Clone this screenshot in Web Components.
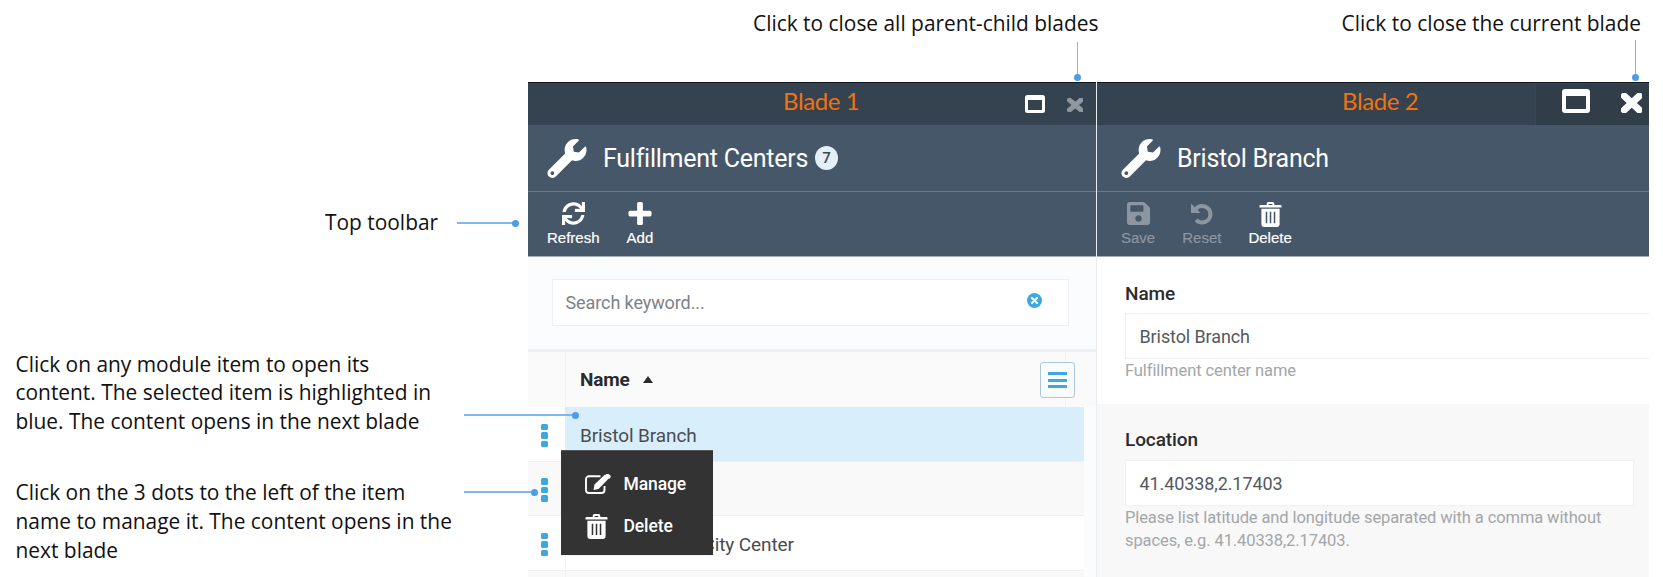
<!DOCTYPE html>
<html lang="en"><head><meta charset="utf-8"><title>Blades</title>
<style>html,body{margin:0;padding:0;background:#fff}</style></head>
<body>
<app-root>
  <top-notes slot="top">
    <note-text>Click to close all parent-child blades</note-text>
    <note-text>Click to close the current blade</note-text>
  </top-notes>
  <left-notes slot="left">
    <note-text style="padding-left:309.5px">Top toolbar</note-text>
    <note-text style="margin-top:112.6px">Click on any module item to open its<br>content. The selected item is highlighted in<br>blue. The content opens in the next blade</note-text>
    <note-text style="margin-top:42.6px">Click on the 3 dots to the left of the item<br>name to manage it. The content opens in the<br>next blade</note-text>
  </left-notes>
  <blade-panel slot="blades" label="Blade 1" heading="Fulfillment Centers" badge="7" style="--w:569px;--pad:19px;--label-left:255px;--tool-pad:19px;--border:#e9ecf1;--win-color:#8f979f">
    <tool-button slot="tools" icon="sync">Refresh</tool-button>
    <tool-button slot="tools" icon="plus">Add</tool-button>
    <list-view></list-view>
  </blade-panel>
  <blade-panel slot="blades" big label="Blade 2" heading="Bristol Branch" style="--w:553px;--pad:24px;--label-left:245px;--tool-pad:24px;--border:transparent;--win-color:#fff">
    <tool-button slot="tools" icon="save" disabled>Save</tool-button>
    <tool-button slot="tools" icon="undo" disabled>Reset</tool-button>
    <tool-button slot="tools" icon="trash">Delete</tool-button>
    <field-group bleed label="Name" value="Bristol Branch">Fulfillment center name</field-group>
    <field-group shaded label="Location" value="41.40338,2.17403">Please list latitude and longitude separated with a comma without spaces, e.g. 41.40338,2.17403.</field-group>
  </blade-panel>
  <call-out slot="over" dir="v" x="1077" y="42" len="35"></call-out>
  <call-out slot="over" dir="v" x="1635" y="40" len="37"></call-out>
  <call-out slot="over" dir="h" x="457" y="222" len="58"></call-out>
  <call-out slot="over" dir="h" x="464" y="414" len="111.5"></call-out>
  <call-out slot="over" dir="h" x="464" y="491" len="70"></call-out>
</app-root>
<script>
const ICONS = {
  wrench:`<svg viewBox="0 0 512 512" width="100%" height="100%" fill="currentColor"><path d="M507.73 109.1c-2.24-9.03-13.54-12.09-20.12-5.51l-74.36 74.36-67.88-11.31-11.31-67.88 74.36-74.36c6.62-6.62 3.43-17.9-5.66-20.16-47.38-11.74-99.55.91-136.58 37.93-39.64 39.64-50.55 97.1-34.05 147.2L18.74 402.76c-24.99 24.99-24.99 65.51 0 90.5 24.99 24.99 65.51 24.99 90.5 0l213.21-213.21c50.12 16.71 107.47 5.68 147.37-34.22 37.07-37.07 49.7-89.32 37.91-136.73zM64 472c-13.25 0-24-10.75-24-24 0-13.26 10.75-24 24-24s24 10.74 24 24c0 13.25-10.75 24-24 24z"/></svg>`,
  sync:`<svg viewBox="0 0 512 512" width="23" height="23" fill="currentColor"><path d="M440.65 12.57l4 82.77A247.16 247.16 0 0 0 255.83 8C134.73 8 33.91 94.92 12.29 209.82A12 12 0 0 0 24.09 224h49.05a12 12 0 0 0 11.67-9.26 175.91 175.91 0 0 1 317-56.94l-101.46-4.86a12 12 0 0 0-12.57 12v47.41a12 12 0 0 0 12 12H500a12 12 0 0 0 12-12V12a12 12 0 0 0-12-12h-47.37a12 12 0 0 0-11.98 12.57zM255.83 432a175.61 175.61 0 0 1-146-77.8l101.8 4.87a12 12 0 0 0 12.57-12v-47.4a12 12 0 0 0-12-12H12a12 12 0 0 0-12 12V500a12 12 0 0 0 12 12h47.35a12 12 0 0 0 12-12.6l-4.15-82.57A247.17 247.17 0 0 0 255.83 504c121.11 0 221.93-86.92 243.55-201.82a12 12 0 0 0-11.8-14.18h-49.05a12 12 0 0 0-11.67 9.26A175.86 175.86 0 0 1 255.83 432z"/></svg>`,
  plus:`<svg viewBox="0 0 24 24" width="24" height="23" fill="currentColor"><rect x="9" y="0" width="6" height="24" rx="1.6"/><rect x="0" y="9" width="24" height="6" rx="1.6"/></svg>`,
  save:`<svg viewBox="0 32 448 448" width="23" height="23" preserveAspectRatio="none" fill="currentColor"><path d="M433.941 129.941l-83.882-83.882A48 48 0 0 0 316.118 32H48C21.49 32 0 53.49 0 80v352c0 26.51 21.49 48 48 48h352c26.51 0 48-21.49 48-48V163.882a48 48 0 0 0-14.059-33.941zM224 416c-35.346 0-64-28.654-64-64 0-35.346 28.654-64 64-64s64 28.654 64 64c0 35.346-28.654 64-64 64zm96-304.52V212c0 6.627-5.373 12-12 12H76c-6.627 0-12-5.373-12-12V108c0-6.627 5.373-12 12-12h228.52c3.183 0 6.235 1.264 8.485 3.515l3.48 3.48A11.996 11.996 0 0 1 320 111.48z"/></svg>`,
  undo:`<svg viewBox="0 0 24 24" width="23" height="23" fill="none"><path d="M6.2 7.2A8.6 8.6 0 1 1 6.4 18.6" stroke="currentColor" stroke-width="4.2"/><path d="M1 1.6v10h10z" fill="currentColor"/></svg>`,
  trash:`<svg viewBox="0 0 24 26" width="23" height="25" fill="currentColor"><path fill-rule="evenodd" d="M8 3V2a2 2 0 0 1 2-2h4a2 2 0 0 1 2 2v1h6.5a1 1 0 0 1 1 1v1.6H.5V4a1 1 0 0 1 1-1zM10 3h4V2h-4zM2.5 7h19v16.5A2.5 2.5 0 0 1 19 26H5a2.5 2.5 0 0 1-2.5-2.5zM7 10v12h1.6V10zM11.2 10v12h1.6V10zM15.4 10v12H17V10z"/></svg>`,
  edit:`<svg viewBox="0 0 26 20" width="26" height="20" fill="none"><path d="M15.5 2.2H4A3 3 0 0 0 1 5.200v10.800a3 3 0 0 0 3 3h12.500a3 3 0 0 0 3-3v-4" stroke="currentColor" stroke-width="1.900"/><path d="M8 10.500L18.500 0.500l4 3.800L12 15l-5 1z" fill="currentColor" transform="translate(1.500 0)"/><path d="M21.500 0l1.800-.3 2.500 2.400-.4 1.700-1.200 1.200-3.900-3.800z" fill="currentColor"/></svg>`,
  times:`<svg viewBox="0 80 352 352" width="100%" height="100%" preserveAspectRatio="none" fill="currentColor" stroke="currentColor" stroke-width="22"><path d="M242.72 256l100.07-100.07c12.28-12.28 12.28-32.19 0-44.48l-22.24-22.24c-12.28-12.28-32.19-12.28-44.48 0L176 189.28 75.93 89.21c-12.28-12.28-32.19-12.28-44.48 0L9.21 111.45c-12.28 12.28-12.28 32.19 0 44.48L109.28 256 9.21 356.07c-12.28 12.28-12.28 32.19 0 44.48l22.24 22.24c12.28 12.28 32.2 12.28 44.48 0L176 322.72l100.07 100.07c12.28 12.28 32.2 12.28 44.48 0l22.24-22.24c12.28-12.28 12.28-32.19 0-44.48L242.72 256z"/></svg>`
};
function def(name, css, html, init){
  customElements.define(name, class extends HTMLElement{
    constructor(){super();this.attachShadow({mode:'open'});}
    connectedCallback(){
      const a=n=>this.getAttribute(n)||'';
      this.shadowRoot.innerHTML=`<style>${css}</style>`+(typeof html==='function'?html(a,this):html);
      if(init)init(this);
    }
  });
}
const ROBOTO='Roboto,"Liberation Sans",sans-serif';

def('app-root',`
  :host{display:grid;grid-template-columns:528px 1122px 13px;grid-template-rows:82px 495px;width:1663px;height:577px;overflow:hidden;position:relative;background:#fff}
  .top{grid-column:2;grid-row:1;display:block}
  .left{grid-column:1;grid-row:2;display:block}
  .blades{grid-column:2;grid-row:2;display:flex;min-height:0;overflow:hidden}
`,`<div class="top"><slot name="top"></slot></div><div class="left"><slot name="left"></slot></div><div class="blades"><slot name="blades"></slot></div><slot name="over"></slot>`);

def('top-notes',`:host{display:flex;justify-content:space-between;padding:9px 9px 0 225px;box-sizing:border-box;height:82px}`,`<slot></slot>`);
def('left-notes',`:host{display:flex;flex-direction:column;padding:126.400px 0 0 15.500px;box-sizing:border-box;height:495px;overflow:hidden}`,`<slot></slot>`);
def('note-text',`:host{display:block;font:20.900px/28.700px "Open Sans",sans-serif;color:#111;white-space:nowrap}`,`<slot></slot>`);

def('call-out',`
  :host{position:absolute;display:block;pointer-events:none}
  .l{position:absolute;background:#7fb6ee}
  .d{position:absolute;width:7px;height:7px;border-radius:50%;background:#4f9ce6}
`,(a)=>{
  const x=+a('x'),y=+a('y'),n=+a('len');
  return a('dir')==='v'
   ?`<div class="l" style="left:${x}px;top:${y}px;width:1px;height:${n}px"></div><div class="d" style="left:${x-3}px;top:${y+n-3.500}px"></div>`
   :`<div class="l" style="left:${x}px;top:${y}px;width:${n}px;height:1.500px"></div><div class="d" style="left:${x+n-3.500}px;top:${y-2.500}px"></div>`;
});

def('blade-panel',`
  :host{display:flex;flex-direction:column;flex:none;width:var(--w);box-sizing:border-box;height:495px;border-right:1px solid var(--border);font-family:${ROBOTO}}
  .head{flex:none;height:43px;box-sizing:border-box;background:#35424f;border-top:1px solid #14181c;display:flex;align-items:center;padding-left:var(--label-left)}
  .label{font:24px/1 Lato,"Open Sans",sans-serif;color:#f2720f;letter-spacing:-.4px;margin-top:-6px;white-space:nowrap}
  .win{margin-left:auto;display:flex;align-items:center;color:var(--win-color)}
  .max{box-sizing:border-box;width:20px;height:18px;border:3px solid #fff;border-top-width:5.500px;border-radius:2.500px;background:#35424f}
  .cls{width:16.500px;height:14px;margin:0 13px 0 22px;display:block}
  :host([big]) .win{align-self:stretch;width:114px;justify-content:flex-start;background:#323d4a;border-left:1px solid #3a4753;box-sizing:border-box;padding:2px 0 5px 26px;margin-top:2px}
  :host([big]) .max{width:28px;height:24px;border-width:4px;border-top-width:7px;border-radius:3px;background:#323d4a;margin-top:-5px}
  :host([big]) .cls{width:21.500px;height:20px;margin:-1px 0 0 30.500px}
  .title{flex:none;height:67px;box-sizing:border-box;background:#465769;border-bottom:1px solid #6b7a89;display:flex;align-items:center;padding-left:var(--pad);color:#fff}
  .wr{width:40px;height:39px;margin-right:16px;flex:none}
  .h{font-size:25px;font-weight:400;letter-spacing:-.25px;white-space:nowrap}
  .bd{margin-left:7px;width:23px;height:24px;border-radius:50%;background:#e3eff9;color:#3c4a58;font-size:15px;font-weight:500;display:flex;align-items:center;justify-content:center}
  .tools{flex:none;height:65px;box-sizing:border-box;background:#465769;border-bottom:1px solid #a3adb7;display:flex;gap:27px;padding:10px 0 0 var(--tool-pad)}
  .body{flex:1;min-height:0;background:#fbfcfe;display:flex;flex-direction:column;overflow:hidden}
  :host([big]) .body{background:#fff}
`,(a,el)=>`
  <div class="head"><span class="label">${a('label')}</span><div class="win"><div class="max"></div><span class="cls">${ICONS.times}</span></div></div>
  <div class="title"><span class="wr">${ICONS.wrench}</span><span class="h">${a('heading')}</span>${a('badge')?`<span class="bd">${a('badge')}</span>`:''}</div>
  <div class="tools"><slot name="tools"></slot></div>
  <div class="body"><slot></slot></div>`);

def('tool-button',`
  :host{display:flex;flex-direction:column;align-items:center;color:#fff;font:400 15px/18px "Liberation Sans",Arial,sans-serif;-webkit-text-stroke:.2px currentColor;white-space:nowrap}
  :host([disabled]){color:#8b96a2}
  .i{height:26px;display:flex;align-items:flex-start;justify-content:center;margin-bottom:1px;-webkit-text-stroke:0}
`,(a)=>`<span class="i">${ICONS[a('icon')]}</span><slot></slot>`);

def('list-view',`
  :host{display:block;font-family:${ROBOTO};position:relative}
  .sw{padding:22px 27px 23px 23.500px}
  .search{height:47px;box-sizing:border-box;border:1.500px solid #eef0f4;background:#fff;display:flex;align-items:center;padding:0 13px;font-size:18px;color:#7d8288;letter-spacing:-.1px}
  .x{margin-left:auto;margin-right:13px;margin-top:-4px;width:15px;height:15px;display:block}
  .tbl{position:relative;border-top:3px solid #edf0f5}
  .th{height:55px;box-sizing:border-box;background:#fafafa;display:grid;grid-template-columns:37px 1fr;position:relative}
  .th .n{border-left:1px solid #eff1f4;grid-column:2;display:flex;align-items:center;padding-left:14px;font-size:19px;font-weight:700;color:#2b2b2b;letter-spacing:-.2px}
  .arrow{margin-left:13px;width:0;height:0;border-left:5.500px solid transparent;border-right:5.500px solid transparent;border-bottom:7px solid #2b2b2b}
  .vl{position:absolute;left:537px;top:0;bottom:0;width:1px;background:#eff1f4}
  .mb{position:absolute;left:512px;top:10px;width:35px;height:36px;box-sizing:border-box;border:1.500px solid #a9c6da;border-radius:3px;background:#f9fbfc;display:flex;flex-direction:column;align-items:center;justify-content:center;gap:3.500px}
  .mb i{display:block;width:19px;height:3px;background:#3ea7e0}
`,`<div class="sw"><div class="search">Search keyword...<svg class="x" viewBox="0 0 16 16"><circle cx="8" cy="8" r="8" fill="#3fa8e0"/><path d="M5.300 5.300l5.400 5.400M10.700 5.300l-5.400 5.400" stroke="#fff" stroke-width="2.200" stroke-linecap="round"/></svg></div></div>
<div class="tbl">
  <div class="th"><div class="n">Name<span class="arrow"></span></div><div class="vl"></div><div class="mb"><i></i><i></i><i></i></div></div>
  <list-row selected>Bristol Branch</list-row>
  <list-row shaded></list-row>
  <list-row>San Francisco City Center</list-row>
  <list-row shaded></list-row>
  <context-menu></context-menu>
</div>`);

def('list-row',`
  :host{display:grid;grid-template-columns:37px 1fr;height:54.500px;box-sizing:border-box;margin-right:12px;border-bottom:1.500px solid #eef0f4;background:#fff;font-size:19px;color:#4a4d50;letter-spacing:-.1px}
  :host([shaded]){background:#f9f9f9}
  .d{display:flex;flex-direction:column;gap:2px;align-items:center;justify-content:center;padding-right:4px;padding-top:3px;box-sizing:border-box}
  .d i{display:block;width:6.500px;height:6.500px;border-radius:1.500px;background:#3ea7e0}
  .n{border-left:1px solid #eef0f4;display:flex;align-items:center;padding-left:14px;white-space:nowrap;padding-top:4px}
  :host([selected]) .n{background:#d9eefb;border-left-color:#d9eefb}
`,`<div class="d"><i></i><i></i><i></i></div><div class="n"><slot></slot></div>`);

def('context-menu',`
  :host{position:absolute;left:33px;top:98px;width:151.500px;height:106px;box-sizing:border-box;background:#333;border-bottom:1px solid #f4f4f4;border-top:1px solid #555;color:#fff;font:500 17.500px/20px ${ROBOTO};padding:21px 0 0 24px;display:flex;flex-direction:column;gap:18px}
  .r{display:flex;align-items:center;height:24px;letter-spacing:-.1px}
  .ic{width:38.500px;display:flex;align-items:center;flex:none}
`,`<div class="r"><span class="ic">${ICONS.edit}</span>Manage</div><div class="r"><span class="ic">${ICONS.trash}</span>Delete</div>`);

def('field-group',`
  :host{display:block;padding:27px 15px 22px 28px;font-family:${ROBOTO};background:#fff}
  :host([bleed]){padding-right:0}
  :host([shaded]){background:#f8f8f9;padding-top:26px;flex:1}
  .l{font-size:19px;line-height:20px;font-weight:500;color:#2c2c2c;letter-spacing:-.1px}
  .i{margin-top:9px;height:46px;box-sizing:border-box;border:1.500px solid #eef0f4;background:#fff;display:flex;align-items:center;padding-left:13.500px;font-size:18px;color:#55595d;letter-spacing:-.1px}
  :host([bleed]) .i{border-right:0}
  :host([shaded]) .i{margin-top:10.500px}
  .h{font-size:16.500px;line-height:22.700px;color:#a3a6a9;letter-spacing:-.1px;margin-top:1px;margin-bottom:-1px}
`,(a)=>`<div class="l">${a('label')}</div><div class="i">${a('value')}</div><div class="h"><slot></slot></div>`);
</script>
</body></html>
